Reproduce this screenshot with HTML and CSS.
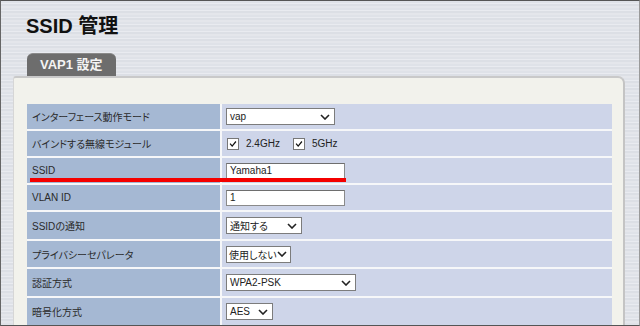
FILE: index.html
```html
<!DOCTYPE html>
<html lang="ja">
<head>
<meta charset="utf-8">
<title>SSID 管理</title>
<link rel="stylesheet" href="styles.css">
</head>
<body>
<div class="frame">
  <h1 class="title">SSID 管理</h1>
  <div class="tab">VAP1 設定</div>
  <div class="panel">
    <div class="grid">
      <div class="label r25">インターフェース動作モード</div>
      <div class="value r25">
        <div class="select sel-mode"><span>vap</span><svg class="chev" viewBox="0 0 10 6" width="10" height="6"><path d="M1 1 L5 5 L9 1" fill="none" stroke="#222" stroke-width="1.6"/></svg></div>
      </div>

      <div class="label r25">バインドする無線モジュール</div>
      <div class="value r25">
        <span class="check"><svg viewBox="0 0 12 12" width="12" height="12"><path d="M2.5 5.5 L5 8.5 L9.5 3" fill="none" stroke="#111" stroke-width="1.5"/></svg></span>
        <span class="chk-text">2.4GHz</span>
        <span class="check second"><svg viewBox="0 0 12 12" width="12" height="12"><path d="M2.5 5.5 L5 8.5 L9.5 3" fill="none" stroke="#111" stroke-width="1.5"/></svg></span>
        <span class="chk-text">5GHz</span>
      </div>

      <div class="label r25">SSID</div>
      <div class="value r25"><div class="input">Yamaha1</div></div>

      <div class="label r25">VLAN ID</div>
      <div class="value r25"><div class="input">1</div></div>

      <div class="label r27">SSIDの通知</div>
      <div class="value r27">
        <div class="select sel-notify"><span>通知する</span><svg class="chev" viewBox="0 0 10 6" width="10" height="6"><path d="M1 1 L5 5 L9 1" fill="none" stroke="#222" stroke-width="1.6"/></svg></div>
      </div>

      <div class="label r26">プライバシーセパレータ</div>
      <div class="value r26">
        <div class="select sel-priv"><span>使用しない</span><svg class="chev" viewBox="0 0 10 6" width="10" height="6"><path d="M1 1 L5 5 L9 1" fill="none" stroke="#222" stroke-width="1.6"/></svg></div>
      </div>

      <div class="label r27">認証方式</div>
      <div class="value r27">
        <div class="select sel-auth"><span>WPA2-PSK</span><svg class="chev" viewBox="0 0 10 6" width="10" height="6"><path d="M1 1 L5 5 L9 1" fill="none" stroke="#222" stroke-width="1.6"/></svg></div>
      </div>

      <div class="label r27">暗号化方式</div>
      <div class="value r27">
        <div class="select sel-enc"><span>AES</span><svg class="chev" viewBox="0 0 10 6" width="10" height="6"><path d="M1 1 L5 5 L9 1" fill="none" stroke="#222" stroke-width="1.6"/></svg></div>
      </div>
    </div>
  </div>
  <div class="redline"></div>
</div>
</body>
</html>
```

FILE: styles.css
```css
* { box-sizing: border-box; }
html, body { margin: 0; padding: 0; }
body {
  font-family: "Liberation Sans", "Noto Sans CJK JP", sans-serif;
  color: #222;
}
.frame {
  position: relative;
  width: 640px;
  height: 326px;
  overflow: hidden;
  border-top: 1px solid #555;
  border-left: 1px solid #666;
  border-bottom: 1px solid #555;
  border-right: 1px solid #9a9a9a;
  padding: 13px 14px 0 12px;
  background:
    repeating-linear-gradient(to bottom,
      #dfe2e8 0px, #dfe2e8 2px,
      #e9ebf0 2px, #e9ebf0 3px,
      #dcdfe5 3px, #dcdfe5 5px,
      #e4e6eb 5px, #e4e6eb 7px);
}
.title {
  margin: 0 0 15px 13px;
  font-family: "Liberation Sans", "Noto Sans CJK JP", sans-serif;
  font-weight: bold;
  font-size: 20px;
  line-height: 24px;
  color: #111;
}
.tab {
  margin-left: 14px;
  width: 89px;
  height: 23px;
  background: #6d6d6d;
  border-radius: 6px 6px 0 0;
  border-top: 1px solid #8a8a8a;
  color: #f4f4f4;
  font-weight: bold;
  font-size: 13px;
  line-height: 22px;
  padding-left: 13px;
  font-family: "Liberation Sans", "Noto Sans CJK JP", sans-serif;
}
.panel {
  width: 612px;
  height: 260px;
  background: #f2f2ec;
  border-top: 2px solid #c9c9c9;
  border-right: 2px solid #c4c4c4;
  border-left: 1px solid #d6d6d6;
  border-radius: 3px 7px 0 0;
  padding: 26px 11px 0 13px;
}
.grid {
  display: grid;
  grid-template-columns: 193px 1fr;
  column-gap: 2px;
  row-gap: 2px;
  background: #f6f7f9;
}
.r25 { height: 25px; }
.r26 { height: 26px; }
.r27 { height: 27px; }
.label {
  background: #a5b8d3;
  display: flex;
  align-items: center;
  padding-left: 5px;
  font-size: 10px;
  font-feature-settings: "palt";
  color: #2a2a2a;
  white-space: nowrap;
}
.value {
  background: #ced5e9;
  display: flex;
  align-items: center;
  padding-left: 4px;
  font-size: 10px;
  white-space: nowrap;
}
.select {
  height: 17px;
  background: #fff;
  border: 1px solid #7c7c7c;
  display: flex;
  align-items: center;
  justify-content: space-between;
  padding: 0 4px 0 3px;
  font-size: 10px;
  font-feature-settings: "palt";
  color: #222;
  white-space: nowrap;
}
.select span { white-space: nowrap; }
.chev { display: block; flex: none; }
.sel-mode { width: 109px; }
.sel-notify { width: 76px; }
.sel-priv { width: 65px; padding-right: 3px; padding-left: 2px; }
.sel-auth { width: 130px; }
.sel-enc { width: 47px; }
.input {
  width: 119px;
  height: 16px;
  background: #fff;
  border: 1px solid #8a8a8a;
  border-top-color: #6e6e6e;
  padding-left: 3px;
  font-size: 10px;
  line-height: 14px;
  color: #222;
}
.check {
  width: 12px;
  height: 12px;
  background: #fff;
  border: 1px solid #777;
  display: inline-flex;
  margin-left: 1px;
}
.check svg { width: 10px; height: 10px; }
.check.second { margin-left: 13px; }
.chk-text {
  margin-left: 7px;
  font-size: 10px;
  color: #222;
}
.redline {
  position: absolute;
  left: 29px;
  top: 177px;
  width: 316px;
  height: 4px;
  background: #f40000;
}
```
